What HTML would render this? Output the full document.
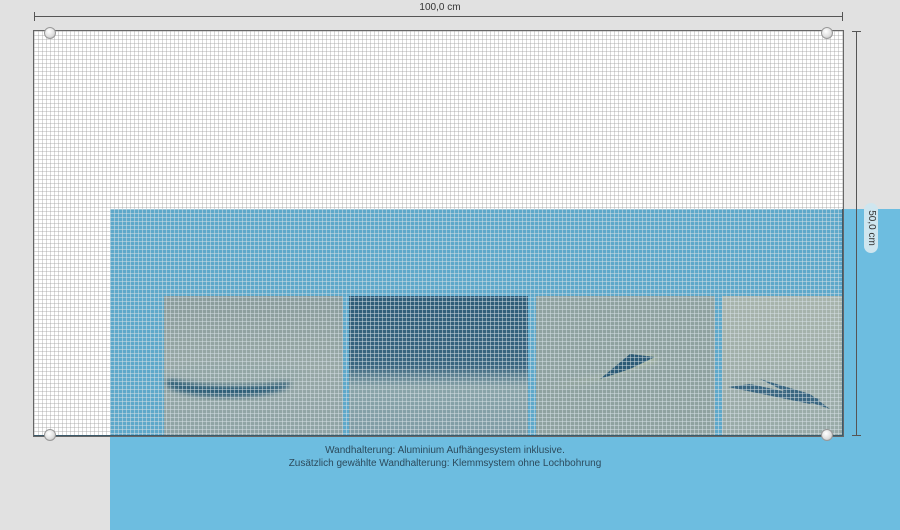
<!DOCTYPE html>
<html><head><meta charset="utf-8"><style>
body{margin:0;width:900px;height:530px;background:#e1e1e1;position:relative;overflow:hidden;font-family:"Liberation Sans",sans-serif}
.a{position:absolute}
.grid{background-image:linear-gradient(to right,rgba(160,160,160,.4) 1px,transparent 1px),linear-gradient(to bottom,rgba(160,160,160,.4) 1px,transparent 1px);background-size:4px 4px}
.bgrid{background-image:linear-gradient(to right,rgba(215,225,230,.5) 1px,transparent 1px),linear-gradient(to bottom,rgba(215,225,230,.5) 1px,transparent 1px);background-size:4px 4px}
.ring{position:absolute;width:10px;height:10px;border-radius:50%;background:radial-gradient(circle at 40% 35%,#fff,#ddd 60%,#aaa);border:1px solid #999}
</style></head><body>
<div class="a" style="left:34px;top:16px;width:809px;height:1px;background:#555"></div>
<div class="a" style="left:34px;top:12px;width:1px;height:9px;background:#555"></div>
<div class="a" style="left:842px;top:12px;width:1px;height:9px;background:#555"></div>
<div class="a" style="left:400px;top:2px;width:80px;text-align:center;font-size:10px;color:#333;background:#e1e1e1">100,0 cm</div>
<div class="a" style="left:110px;top:209px;width:790px;height:321px;background:#6dbde0"></div>
<div class="a grid" style="left:34px;top:31px;width:809px;height:405px;background-color:#fff;box-shadow:0 0 0 1px #666"></div>
<div class="a" style="left:110px;top:209px;width:733px;height:227px;background:#5ea8ca"></div>
<svg class="a" style="left:110px;top:209px" width="733" height="227">
<defs>
<linearGradient id="g1" x1="0" y1="0" x2="0" y2="1"><stop offset="0" stop-color="#8a9c9c"/><stop offset=".5" stop-color="#98a8a6"/><stop offset="1" stop-color="#8ea3a5"/></linearGradient>
<linearGradient id="g2" x1="0" y1="0" x2="0" y2="1"><stop offset="0" stop-color="#2f5d78"/><stop offset=".5" stop-color="#3a6680"/><stop offset=".65" stop-color="#8aa4a8"/><stop offset="1" stop-color="#7f9ca6"/></linearGradient>
<linearGradient id="g4" x1="0" y1="0" x2="0" y2="1"><stop offset="0" stop-color="#a8b4ac"/><stop offset="1" stop-color="#98aaa8"/></linearGradient>
<filter id="b"><feGaussianBlur stdDeviation="3"/></filter>
</defs>
<rect x="54" y="87" width="179" height="140" fill="url(#g1)"/>
<ellipse cx="118" cy="174" rx="62" ry="14" fill="#2f5f78" filter="url(#b)"/>
<ellipse cx="125" cy="165" rx="70" ry="12" fill="#93a6a5" filter="url(#b)"/>
<rect x="239" y="87" width="179" height="140" fill="url(#g2)"/>
<rect x="426" y="87" width="179" height="140" fill="#8fa2a0"/>
<path d="M430 180 L500 165 L540 145 L550 152 L520 160 L490 170 Z" fill="#a7b6a2" filter="url(#b)"/>
<path d="M490 170 L520 145 L545 148 L520 160 Z" fill="#2c5a75"/>
<rect x="612" y="87" width="121" height="140" fill="url(#g4)"/>
<path d="M618 178 L700 195 L710 190 L640 175 Z" fill="#3a6680"/>
<path d="M650 170 L690 190 L720 200 L700 185 Z" fill="#3a6680"/>
</svg>
<div class="a bgrid" style="left:110px;top:209px;width:733px;height:227px"></div>
<div class="a" style="left:34px;top:435px;width:809px;height:1px;background:#3b5a6b"></div>
<div class="a" style="left:842px;top:209px;width:1px;height:227px;background:#3b5a6b"></div>
<div class="ring" style="left:44px;top:27px"></div>
<div class="ring" style="left:821px;top:27px"></div>
<div class="ring" style="left:44px;top:429px"></div>
<div class="ring" style="left:821px;top:429px"></div>
<div class="a" style="left:856px;top:31px;width:1px;height:405px;background:#555"></div>
<div class="a" style="left:852px;top:31px;width:9px;height:1px;background:#555"></div>
<div class="a" style="left:852px;top:435px;width:9px;height:1px;background:#555"></div>
<div class="a" style="left:846px;top:221px;width:50px;height:14px;transform:rotate(90deg);text-align:center;font-size:10px;line-height:14px;color:#333;background:#cfe6ef;border-radius:7px">50,0 cm</div>
<div class="a" style="left:200px;top:444px;width:490px;text-align:center;font-size:10px;line-height:13px;color:#2c4a5c">Wandhalterung: Aluminium Aufhängesystem inklusive.<br>Zusätzlich gewählte Wandhalterung: Klemmsystem ohne Lochbohrung</div>
</body></html>
